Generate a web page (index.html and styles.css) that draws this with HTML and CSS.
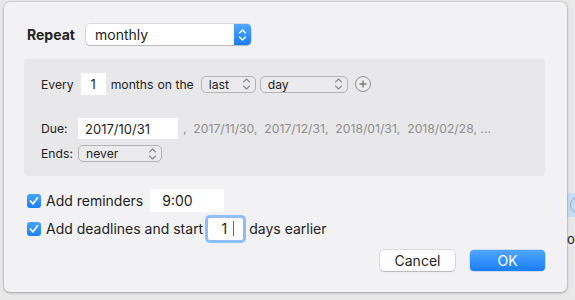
FILE: index.html
```html
<!DOCTYPE html>
<html lang="en">
<head>
  <meta charset="utf-8" />
  <title>Repeat</title>
  <link rel="stylesheet" href="styles.css">
</head>
<body>
<!-- things of the window behind the sheet -->
<div class="behind-row"><span class="behind-circle"></span></div>
<div class="behind-text">o</div>

<div class="sheet">
  <div class="repeat-row">
    <span class="repeat-label">Repeat</span>
    <div class="popup-main">
      <span>monthly</span>
      <span class="stepper">
        <svg width="9" height="14" viewBox="0 0 9 14"><path d="M1.5 5 L4.5 2 L7.5 5 M1.5 9 L4.5 12 L7.5 9" fill="none" stroke="#fff" stroke-width="1.4" stroke-linecap="round" stroke-linejoin="round"/></svg>
      </span>
    </div>
  </div>

  <div class="rule-box">
    <div class="row every-row">
      <span>Every</span>
      <span class="field num-field">1</span>
      <span>months</span>
      <span class="on-the">on the</span>
      <div class="popup popup-last">
        <span>last</span>
        <svg width="9" height="14" viewBox="0 0 9 14"><path d="M1.5 5 L4.5 2 L7.5 5 M1.5 9 L4.5 12 L7.5 9" fill="none" stroke="#8a8a8a" stroke-width="1.1" stroke-linecap="round" stroke-linejoin="round"/></svg>
      </div>
      <div class="popup popup-day">
        <span>day</span>
        <svg width="9" height="14" viewBox="0 0 9 14"><path d="M1.5 5 L4.5 2 L7.5 5 M1.5 9 L4.5 12 L7.5 9" fill="none" stroke="#8a8a8a" stroke-width="1.1" stroke-linecap="round" stroke-linejoin="round"/></svg>
      </div>
      <span class="plus">
        <svg width="16" height="16" viewBox="0 0 16 16"><circle cx="8" cy="8" r="7.5" fill="#ededed" stroke="#8e8e8e"/><path d="M8 4.5 V11.5 M4.5 8 H11.5" stroke="#7a7a7a" stroke-width="1.4"/></svg>
      </span>
    </div>

    <div class="row due-row">
      <span class="lbl">Due:</span>
      <span class="field date-field">2017/10/31</span>
      <span class="next-dates">,&nbsp; 2017/11/30,&nbsp; 2017/12/31,&nbsp; 2018/01/31,&nbsp; 2018/02/28, ...</span>
    </div>

    <div class="row ends-row">
      <span class="lbl">Ends:</span>
      <div class="popup popup-never">
        <span>never</span>
        <svg width="9" height="14" viewBox="0 0 9 14"><path d="M1.5 5 L4.5 2 L7.5 5 M1.5 9 L4.5 12 L7.5 9" fill="none" stroke="#8a8a8a" stroke-width="1.1" stroke-linecap="round" stroke-linejoin="round"/></svg>
      </div>
    </div>
  </div>

  <div class="row check-row reminders">
    <span class="check"><svg width="14" height="14" viewBox="0 0 14 14"><path d="M3.5 7.2 L6 9.8 L10.6 3.8" fill="none" stroke="#fff" stroke-width="1.7" stroke-linecap="round" stroke-linejoin="round"/></svg></span>
    <span class="check-label">Add reminders</span>
    <span class="field time-field">9:00</span>
  </div>

  <div class="row check-row deadlines">
    <span class="check"><svg width="14" height="14" viewBox="0 0 14 14"><path d="M3.5 7.2 L6 9.8 L10.6 3.8" fill="none" stroke="#fff" stroke-width="1.7" stroke-linecap="round" stroke-linejoin="round"/></svg></span>
    <span class="check-label">Add deadlines and start</span>
    <span class="field focus-field">1<span class="caret"></span></span>
    <span>days earlier</span>
  </div>

  <div class="buttons">
    <div class="btn btn-cancel">Cancel</div>
    <div class="btn btn-ok">OK</div>
  </div>
</div>
</body>
</html>
```

FILE: styles.css
```css
body{
  margin: 0;
  background: #e8e8e8;
  font-family: Inter, "Liberation Sans", sans-serif;
  font-size: 13px;
  color: #232323;
  overflow: hidden;
  position: relative;
  height: 300px;
}
.behind-row{
  position: absolute;
  left: 560px;
  top: 193px;
  width: 20px;
  height: 24px;
  background: #c6dcf4;
}
.behind-circle{
  position: absolute;
  left: 10px;
  top: 3px;
  width: 16px;
  height: 16px;
  border: 1px solid #9aa7b6;
  border-radius: 50%;
}
.behind-text{
  position: absolute;
  left: 567px;
  top: 231px;
  font-size: 13px;
  color: #222;
}
.sheet{
  position: relative;
  margin: 2px 0 0 4px;
  width: 563px;
  height: 290px;
  box-sizing: border-box;
  padding: 22px 22px 0 20px;
  background: #f2f2f4;
  border-radius: 6px;
  box-shadow: 0 0 0 1px rgba(0,0,0,0.07), 0 1px 3px rgba(0,0,0,0.25);
}

/* repeat */
.repeat-row{
  display: flex;
  align-items: center;
  height: 21px;
}
.repeat-label{
  font-weight: bold;
  font-size: 14px;
  margin-left: 3px;
  width: 59px;
}
.popup-main{
  display: flex;
  align-items: center;
  justify-content: space-between;
  width: 165px;
  height: 21px;
  box-sizing: border-box;
  padding-left: 9px;
  background: #fff;
  border-radius: 4px;
  box-shadow: 0 0 0 0.5px rgba(0,0,0,0.2), 0 1px 1px rgba(0,0,0,0.15);
  font-size: 14px;
}
.stepper{
  display: flex;
  align-items: center;
  justify-content: center;
  width: 17px;
  height: 21px;
  background: linear-gradient(#52a7ff, #1a7ef6);
  border-radius: 0 4px 4px 0;
}

/* rule box */
.rule-box{
  margin-top: 14px;
  width: 521px;
  box-sizing: border-box;
  padding: 14px 16px 14px 17px;
  background: #e8e8ea;
  border-radius: 4px;
  font-size: 12.2px;
}
.row{
  display: flex;
  align-items: center;
}
.field{
  display: flex;
  align-items: center;
  box-sizing: border-box;
  background: #fff;
  color: #1e1e1e;
}
.every-row{
  height: 22px;
}
.num-field{
  width: 25px;
  height: 22px;
  margin: 0 5px 0 7px;
  justify-content: center;
  font-size: 13px;
}
.on-the{
  margin: 0 3px 0 4px;
}
.popup{
  display: flex;
  align-items: center;
  justify-content: space-between;
  box-sizing: border-box;
  height: 17px;
  padding: 0 4px 0 7px;
  border: 1px solid #b3b3b3;
  border-radius: 5px;
  background: #ebebed;
}
.popup-last{
  width: 55px;
  margin-left: 4px;
}
.popup-day{
  width: 88px;
  margin-left: 4px;
}
.plus{
  display: flex;
  margin-left: 7px;
}
.due-row{
  margin-top: 23px;
  height: 21px;
}
.lbl{
  width: 37px;
}
.date-field{
  width: 100px;
  height: 21px;
  padding-left: 7px;
  font-size: 13px;
}
.next-dates{
  margin-left: 5px;
  color: #8e8e8e;
}
.ends-row{
  margin-top: 6px;
  height: 17px;
}
.popup-never{
  width: 84px;
}

/* checkboxes */
.check-row{
  margin-left: 3px;
}
.reminders{
  margin-top: 13px;
  height: 23px;
}
.deadlines{
  margin-top: 4px;
  height: 25px;
}
.check{
  display: flex;
  width: 14px;
  height: 14px;
  border-radius: 3px;
  background: linear-gradient(#4aa3ff, #1b80f5);
  margin-right: 5px;
}
.check-label{
  font-size: 14px;
}
.deadlines span:last-child{
  font-size: 14px;
  margin-left: 6px;
}
.time-field{
  width: 74px;
  height: 23px;
  margin-left: 7px;
  padding-left: 12px;
  font-size: 14px;
}
.focus-field{
  width: 35px;
  height: 22px;
  margin-left: 5px;
  justify-content: flex-end;
  padding-right: 9px;
  font-size: 14px;
  border-radius: 2px;
  box-shadow: 0 0 0 3px #8fbdf5;
}
.caret{
  width: 1px;
  height: 15px;
  margin-left: 2px;
  background: #1b6fe0;
}

/* buttons */
.buttons{
  display: flex;
  justify-content: flex-end;
  gap: 15px;
  margin-top: 9px;
}
.btn{
  display: flex;
  align-items: center;
  justify-content: center;
  width: 75px;
  height: 21px;
  border-radius: 4px;
  font-size: 14px;
}
.btn-cancel{
  background: #fff;
  box-shadow: 0 0 0 0.5px rgba(0,0,0,0.2), 0 1px 1px rgba(0,0,0,0.15);
}
.btn-ok{
  color: #fff;
  background: linear-gradient(#4ea6ff, #1a7ef6);
  box-shadow: 0 0 0 0.5px rgba(0,80,200,0.3);
}
```
